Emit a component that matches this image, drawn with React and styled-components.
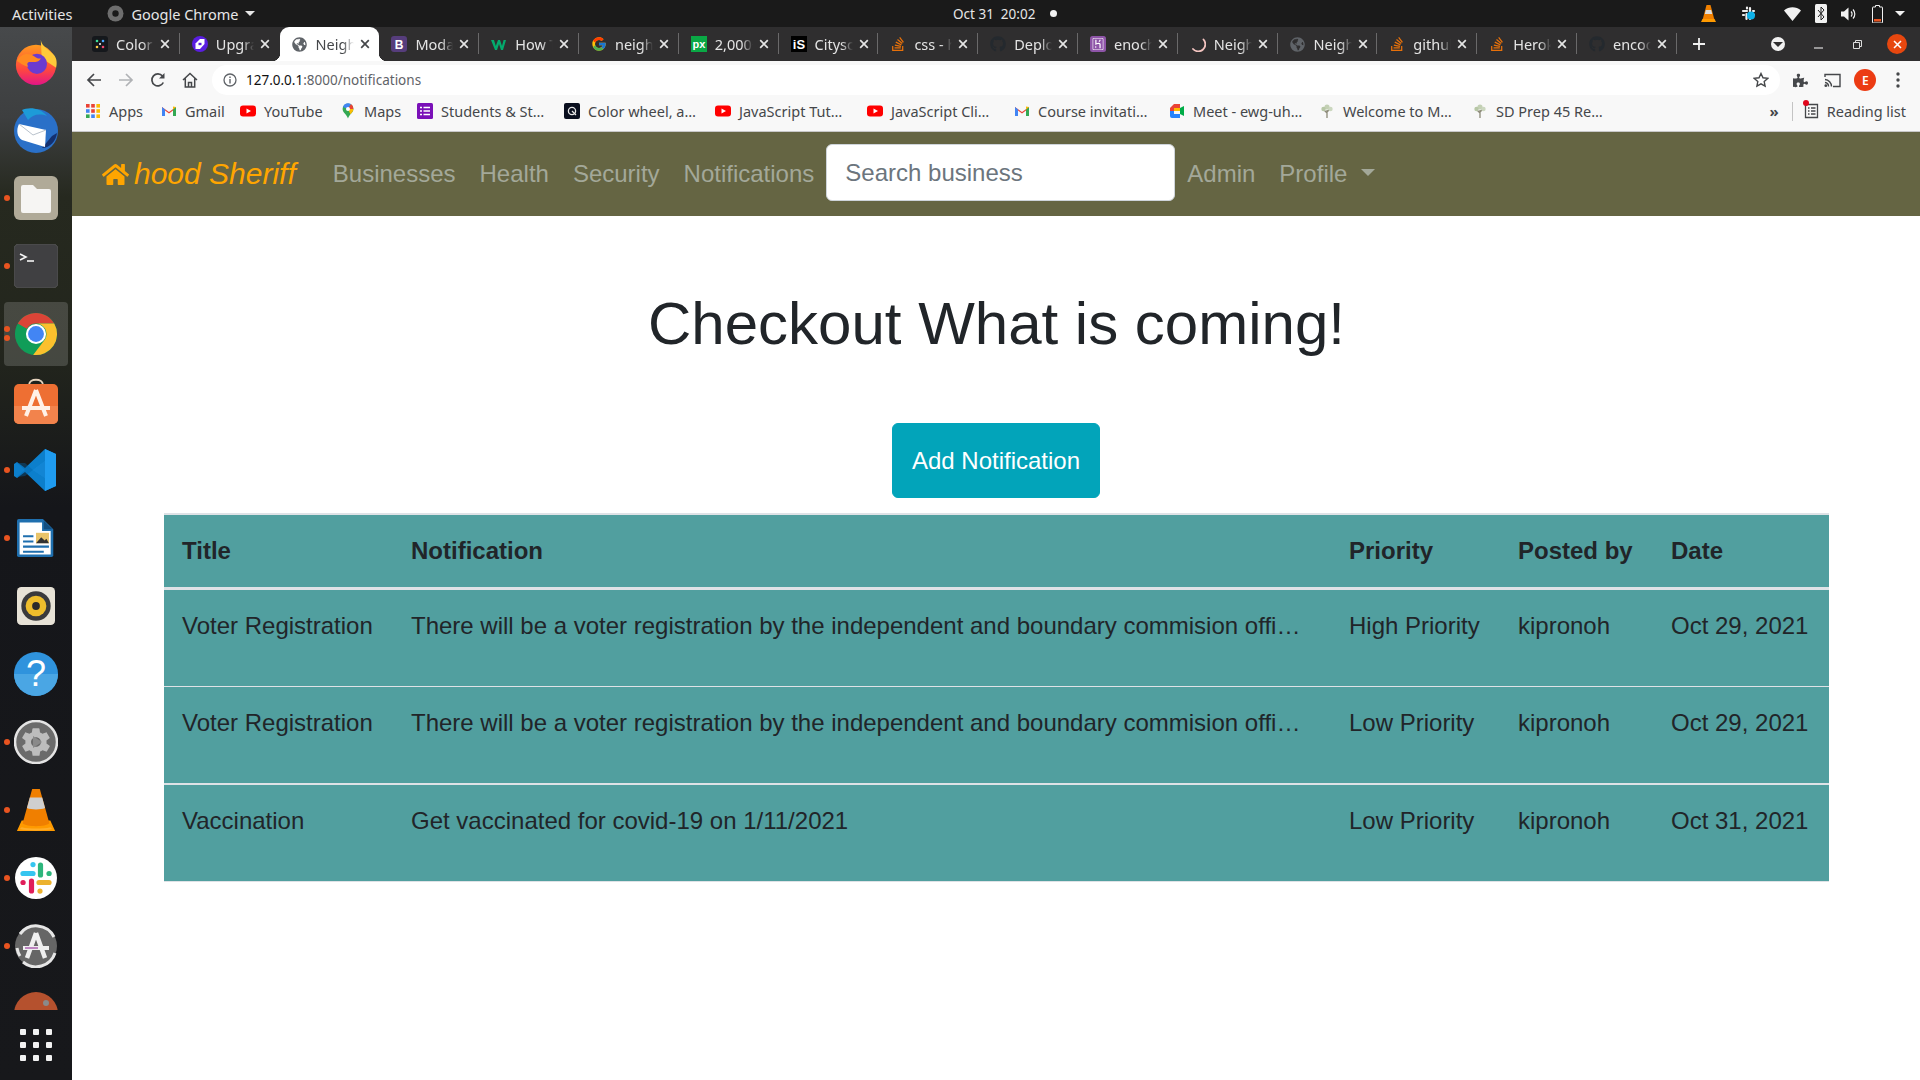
import React from 'react';
import styled, { createGlobalStyle } from 'styled-components';
import { FaHome, FaGithub, FaStackOverflow, FaGlobeAmericas, FaPuzzlePiece } from 'react-icons/fa';
import { FcGoogle } from 'react-icons/fc';
import { SiHeroku } from 'react-icons/si';
import { IoMdSettings } from 'react-icons/io';

const GlobalStyle = createGlobalStyle`
  html, body { margin: 0; padding: 0; background: #fff; }
  body { font-family: "Liberation Sans", Arial, sans-serif; overflow: hidden; }
  * { box-sizing: border-box; }
`;

/* ---------- shell ---------- */

const Screen = styled.div`
  width: 1920px;
  height: 1080px;
  display: flex;
  flex-direction: column;
  overflow: hidden;
`;

const TopBar = styled.header`
  height: 27px;
  flex: none;
  background: #1a1a1a;
  color: #e6e6e6;
  font-family: "Noto Sans", sans-serif;
  font-size: 14.5px;
  display: grid;
  grid-template-columns: 953px auto 1fr;
  align-items: center;
`;

const TopLeft = styled.div`
  display: flex;
  align-items: center;
  padding-left: 12px;
`;

const AppName = styled.div`
  display: flex;
  align-items: center;
  gap: 7px;
  margin-left: 35px;
`;

const Caret = styled.span`
  display: inline-block;
  border-left: 5px solid transparent;
  border-right: 5px solid transparent;
  border-top: 5px solid ${p => p.$color || '#e6e6e6'};
`;

const Clock = styled.div`
  display: flex;
  align-items: center;
  gap: 15px;
  font-size: 13.5px;
  white-space: pre;
`;

const ClockDot = styled.span`
  width: 7px;
  height: 7px;
  border-radius: 50%;
  background: #f2f2f2;
`;

const Tray = styled.div`
  display: flex;
  align-items: center;
  justify-content: flex-end;
  padding-right: 7px;
`;

const TraySlot = styled.div`
  width: ${p => p.$w}px;
  display: flex;
  justify-content: center;
  align-items: center;
`;

const Desktop = styled.div`
  flex: 1;
  display: flex;
  min-height: 0;
`;

const Dock = styled.aside`
  width: 72px;
  flex: none;
  display: flex;
  flex-direction: column;
  background: linear-gradient(180deg, #47494b 0, #3d3f40 90px, #26291f 170px, #23261d 320px, #15161a 480px, #17181b 100%);
`;

const DockList = styled.div`
  flex: 1;
  min-height: 0;
  overflow: hidden;
  padding-top: 1px;
`;

const DockItem = styled.div`
  height: 68px;
  position: relative;
  display: flex;
  align-items: center;
  justify-content: center;
  &::before {
    content: '';
    position: absolute;
    inset: 2px 4px;
    border-radius: 4px;
    background: ${p => (p.$active ? 'rgba(255,255,255,.16)' : 'transparent')};
  }
  svg { position: relative; }
`;

const RunDot = styled.span`
  position: absolute;
  left: 4px;
  top: ${p => p.$top || 31}px;
  width: 6px;
  height: 6px;
  border-radius: 50%;
  background: #e95420;
  z-index: 1;
`;

const ShowApps = styled.div`
  height: 70px;
  flex: none;
  display: flex;
  align-items: center;
  justify-content: center;
`;

const AppsGrid = styled.div`
  display: grid;
  grid-template-columns: repeat(3, 6px);
  gap: 7px;
  span { width: 6px; height: 6px; border-radius: 1px; background: #f2f2f2; }
`;

const Browser = styled.div`
  flex: 1;
  min-width: 0;
  display: flex;
  flex-direction: column;
  background: #fff;
`;

/* ---------- chrome tabs ---------- */

const TabStrip = styled.div`
  height: 34px;
  flex: none;
  background: #2f2e2f;
  display: flex;
  padding-left: 8px;
  position: relative;
`;

const Tab = styled.div`
  width: 99.8px;
  flex: none;
  position: relative;
  display: flex;
  align-items: center;
  padding-left: 12px;
  background: ${p => (p.$active ? '#fff' : 'transparent')};
  border-radius: ${p => (p.$active ? '9px 9px 0 0' : '0')};
  color: ${p => (p.$active ? '#45474a' : '#e4e4e4')};
  font-family: "Noto Sans", sans-serif;
  font-size: 14.5px;
  &::after {
    content: '';
    position: absolute;
    right: 0;
    top: 6px;
    bottom: 7px;
    width: 1px;
    background: ${p => (p.$plain ? 'transparent' : '#6a696a')};
  }
`;

const TabFlare = styled.span`
  position: absolute;
  bottom: 0;
  width: 8px;
  height: 8px;
  ${p => (p.$side === 'left' ? 'left: -8px;' : 'right: -8px;')}
  background: radial-gradient(circle at ${p => (p.$side === 'left' ? '0 0' : '100% 0')}, transparent 8px, #fff 8.5px);
`;

const Favicon = styled.span`
  width: 16px;
  height: 16px;
  flex: none;
  display: flex;
  align-items: center;
  justify-content: center;
`;

const TabTitle = styled.span`
  width: 38px;
  margin-left: 8px;
  overflow: hidden;
  white-space: nowrap;
  -webkit-mask-image: linear-gradient(90deg, #000 70%, transparent 100%);
  mask-image: linear-gradient(90deg, #000 70%, transparent 100%);
`;

const TabClose = styled.span`
  margin-left: 5px;
  width: 12px;
  height: 12px;
  display: flex;
`;

const NewTab = styled.div`
  margin-left: 15px;
  display: flex;
  align-items: center;
`;

const WindowControls = styled.div`
  margin-left: auto;
  display: flex;
  align-items: center;
`;

const ProfileChip = styled.span`
  width: 14px;
  height: 14px;
  border-radius: 50%;
  background: #f1f1f1;
  margin-right: 14px;
  display: flex;
  align-items: center;
  justify-content: center;
`;

const WinButton = styled.span`
  width: 39px;
  display: flex;
  justify-content: center;
`;

const WinClose = styled.span`
  width: 20px;
  height: 20px;
  border-radius: 50%;
  background: #e7470f;
  margin: 0 13px 0 10px;
  display: flex;
  align-items: center;
  justify-content: center;
`;

/* ---------- toolbar + bookmarks ---------- */

const Toolbar = styled.div`
  height: 34px;
  flex: none;
  background: #f8f8f8;
  display: flex;
  align-items: flex-start;
  padding: 4px 0 0 6px;
`;

const NavIcon = styled.span`
  width: 32px;
  height: 30px;
  display: flex;
  align-items: center;
  justify-content: center;
`;

const Omnibox = styled.div`
  width: 1568px;
  height: 30px;
  margin-left: 6px;
  border-radius: 15px;
  background: #fff;
  display: flex;
  align-items: center;
  padding-left: 11px;
  font-family: "Noto Sans", sans-serif;
  font-size: 13.5px;
  color: #5f6368;
`;

const UrlHost = styled.span`
  margin-left: 9px;
  color: #111;
`;

const OmniStar = styled.span`
  margin-left: auto;
  margin-right: 11px;
  display: flex;
`;

const ToolRight = styled.div`
  display: flex;
  align-items: center;
  height: 30px;
  margin-left: 4px;
`;

const ToolSlot = styled.span`
  width: 32.5px;
  display: flex;
  align-items: center;
  justify-content: center;
`;

const Avatar = styled.span`
  width: 22px;
  height: 22px;
  border-radius: 50%;
  background: #ec3b13;
  color: #fff;
  font-family: "Noto Sans", sans-serif;
  font-size: 12px;
  font-weight: 600;
  display: flex;
  align-items: center;
  justify-content: center;
`;

const Bookmarks = styled.div`
  height: 37px;
  flex: none;
  background: #f8f8f8;
  border-bottom: 1px solid #c8c8c8;
  display: flex;
  align-items: center;
  padding: 0 0 4px 13px;
  font-family: "Noto Sans", sans-serif;
  font-size: 14.5px;
  color: #45474a;
`;

const Bookmark = styled.div`
  width: ${p => p.$w}px;
  flex: none;
  display: flex;
  align-items: center;
  gap: 8px;
  white-space: nowrap;
`;

const BookmarkEnd = styled.div`
  margin-left: auto;
  display: flex;
  align-items: center;
  padding-right: 14px;
`;

const Chevrons = styled.span`
  font-size: 15px;
  font-weight: 700;
  margin-right: 13px;
`;

const BarSep = styled.span`
  width: 1px;
  height: 19px;
  background: #c4c4c4;
  margin-right: 11px;
`;

const ReadingIcon = styled.span`
  position: relative;
  display: flex;
  margin-right: 8px;
  &::after {
    content: '';
    position: absolute;
    left: -1px;
    top: -3px;
    width: 6px;
    height: 6px;
    border-radius: 50%;
    background: #e0071c;
  }
`;

/* ---------- the page ---------- */

const Page = styled.div`
  flex: 1;
  min-height: 0;
  display: flex;
  flex-direction: column;
  background: #fff;
  color: #212529;
  font-size: 24px;
  line-height: 36px;
`;

const NavBar = styled.nav`
  height: 84px;
  flex: none;
  background: #656543;
  display: flex;
  align-items: flex-start;
  padding: 12px 24px 0 30px;
`;

const Brand = styled.a`
  height: 60px;
  display: flex;
  align-items: center;
  gap: 5px;
  margin-right: 25px;
  color: #ffa500;
  font-size: 30px;
  font-style: italic;
  white-space: nowrap;
`;

const NavLink = styled.a`
  height: 60px;
  display: flex;
  align-items: center;
  padding: 0 12px;
  color: #a3a899;
  white-space: nowrap;
`;

const DropCaret = styled.span`
  margin-left: 14px;
  margin-top: -3px;
  border-left: 7.2px solid transparent;
  border-right: 7.2px solid transparent;
  border-top: 7.2px solid #a3a899;
`;

const SearchInput = styled.input`
  width: 349px;
  height: 57px;
  padding: 0 18px;
  border: 1px solid #ced4da;
  border-radius: 6px;
  background: #fff;
  font-family: inherit;
  font-size: 24px;
  color: #495057;
  &::placeholder { color: #6c757d; opacity: 1; }
`;

const Content = styled.main`
  padding: 72px 91px 0 92px;
  display: flex;
  flex-direction: column;
  align-items: center;
`;

const Heading = styled.h1`
  margin: 0 0 63px;
  font-size: 60px;
  line-height: 72px;
  font-weight: 400;
`;

const AddButton = styled.button`
  height: 75px;
  width: 208px;
  margin: 0 1px 15px 0;
  border: 1px solid #02a4ba;
  border-radius: 6px;
  background: #02a4ba;
  color: #fff;
  font-family: inherit;
  font-size: 24px;
  line-height: 36px;
`;

const Table = styled.table`
  width: 1665px;
  table-layout: fixed;
  border-collapse: collapse;
  background: #519f9f;
  color: #212529;
  border-bottom: 1px solid #dee2e6;
  tbody tr:last-child td { border-top-width: 2px; }
`;

const Th = styled.th`
  padding: 18px;
  text-align: left;
  font-weight: 700;
  border-top: 2px solid #dee2e6;
  border-bottom: 3px solid #dee2e6;
  height: 74px;
  white-space: nowrap;
`;

const Td = styled.td`
  padding: 18px ${p => (p.$clip ? '30px' : '18px')} 42px 18px;
  border-top: 1px solid #dee2e6;
  vertical-align: top;
  white-space: nowrap;
  overflow: hidden;
  text-overflow: ${p => (p.$clip ? 'ellipsis' : 'clip')};
`;

/* ---------- small drawings ---------- */

const Svg = ({ s = 16, w, h, vb, children }) => (
  <svg width={w || s} height={h || s} viewBox={vb || `0 0 ${s} ${s}`}>{children}</svg>
);

const CloseX = ({ color = '#e4e4e4', s = 12 }) => (
  <svg width={s} height={s} viewBox="0 0 12 12">
    <path d="M2.2 2.2l7.6 7.6M9.8 2.2l-7.6 7.6" stroke={color} strokeWidth="1.7" />
  </svg>
);

const favicons = {
  color: (
    <Svg>
      <rect width="16" height="16" rx="3" fill="#15181c" />
      <circle cx="5" cy="5" r="1.3" fill="#3ddc97" />
      <circle cx="11" cy="5" r="1.3" fill="#4aa8ff" />
      <circle cx="5" cy="11" r="1.3" fill="#ffcb47" />
      <circle cx="11" cy="11" r="1.3" fill="#ef476f" />
      <circle cx="8" cy="8" r="1" fill="#fff" />
    </Svg>
  ),
  upgrade: (
    <Svg>
      <circle cx="8" cy="8" r="8" fill="#5a1ee0" />
      <path d="M3.500 7.500L8 3h4.500v5L8 13H3.500z" fill="#fff" />
      <path d="M6.500 6.800h3v2.400h-3z" fill="#5a1ee0" />
    </Svg>
  ),
  globe: c => <FaGlobeAmericas size={15} color={c} />,
  bootstrap: (
    <Svg>
      <rect width="16" height="16" rx="3" fill="#563d7c" />
      <text x="8" y="12.500" textAnchor="middle" fontSize="12" fontWeight="700" fill="#fff" fontFamily="Liberation Sans">B</text>
    </Svg>
  ),
  w3: (
    <Svg>
      <path d="M0 4h3l1.800 6L7 4h2l2 6 1.600-6H15l-3 10H10L8 8l-2 6H4z" fill="#04aa6d" />
    </Svg>
  ),
  google: <FcGoogle size={16} />,
  px: (
    <Svg>
      <rect width="16" height="16" fill="#0aa845" />
      <text x="8" y="12" textAnchor="middle" fontSize="11" fontWeight="700" fill="#fff" fontFamily="Liberation Sans">px</text>
    </Svg>
  ),
  is: (
    <Svg>
      <rect width="16" height="16" fill="#000" />
      <text x="8" y="13" textAnchor="middle" fontSize="13" fontWeight="700" fill="#fff" fontFamily="Liberation Sans">iS</text>
    </Svg>
  ),
  so: <FaStackOverflow size={16} color="#e8710a" />,
  gh: <FaGithub size={16} color="#24292e" />,
  heroku: (
    <Svg>
      <rect width="16" height="16" rx="2.500" fill="#8e55a8" />
      <g transform="translate(2 2)"><SiHeroku size={12} color="#fff" /></g>
    </Svg>
  ),
  spinner: (
    <Svg>
      <path d="M13.500 3.500 A6.500 6.500 0 0 1 3 13" fill="none" stroke="#f3c4c0" strokeWidth="1.800" strokeLinecap="round" />
    </Svg>
  ),
};

const tabs = [
  { icon: favicons.color, title: 'Color wheel' },
  { icon: favicons.upgrade, title: 'Upgrade now' },
  { icon: favicons.globe('#5f6368'), title: 'Neighbourhood', active: true, plain: true },
  { icon: favicons.bootstrap, title: 'Modal · Bootstrap' },
  { icon: favicons.w3, title: 'How To Create' },
  { icon: favicons.google, title: 'neighbourhood' },
  { icon: favicons.px, title: '2,000+ Free' },
  { icon: favicons.is, title: 'Cityscapes' },
  { icon: favicons.so, title: 'css - how to' },
  { icon: favicons.gh, title: 'Deploy Django' },
  { icon: favicons.heroku, title: 'enoch-app' },
  { icon: favicons.spinner, title: 'Neighbourhood' },
  { icon: favicons.globe('#5f6368'), title: 'Neighbourhood' },
  { icon: favicons.so, title: 'github - how' },
  { icon: favicons.so, title: 'Heroku deploy' },
  { icon: favicons.gh, title: 'encoder' },
];

const Tree = () => (
  <Svg>
    <path d="M8 15V7M8 10L5 7M8 9l3-3" stroke="#8c8a78" strokeWidth="1.300" fill="none" />
    <circle cx="8" cy="4" r="2.600" fill="#c3d0b4" />
    <circle cx="4.500" cy="6" r="2.200" fill="#b7c7a6" />
    <circle cx="11.500" cy="6" r="2.200" fill="#cbd7bf" />
  </Svg>
);

const YouTube = () => (
  <Svg>
    <rect y="2.500" width="16" height="11" rx="3" fill="#f00" />
    <path d="M6.500 5.500L11 8l-4.500 2.500z" fill="#fff" />
  </Svg>
);

const Gmail = () => (
  <Svg>
    <path d="M1 13V4l7 5 7-5v9h-3V7.500L8 10.500 4 7.500V13z" fill="#ea4335" />
    <path d="M1 13V4l3 2.500V13z" fill="#4285f4" />
    <path d="M15 13V4l-3 2.500V13z" fill="#34a853" />
    <path d="M15 4l-3 2.500V3.500z" fill="#fbbc04" />
  </Svg>
);

const bookmarks = [
  { w: 76, text: 'Apps', icon: (
    <Svg>
      {['#ea4335', '#ea4335', '#fbbc04', '#4285f4', '#ea4335', '#fbbc04', '#34a853', '#4285f4', '#fbbc04'].map((c, i) => (
        <rect key={i} x={1 + (i % 3) * 5.2} y={1 + Math.floor(i / 3) * 5.2} width="3.600" height="3.600" fill={c} />
      ))}
    </Svg>
  ) },
  { w: 79, text: 'Gmail', icon: <Gmail /> },
  { w: 100, text: 'YouTube', icon: <YouTube /> },
  { w: 77, text: 'Maps', icon: (
    <Svg>
      <path d="M8 .500a5.400 5.400 0 0 0-5.400 5.400C2.600 9.500 6.600 11 8 15.500c1.400-4.500 5.400-6 5.400-9.600A5.400 5.400 0 0 0 8 .500z" fill="#34a853" />
      <path d="M3 4a5.400 5.400 0 0 1 8-3L8 6z" fill="#4285f4" />
      <path d="M11 1a5.400 5.400 0 0 1 2.400 5L8 6z" fill="#ea4335" />
      <path d="M13.400 6c0 2-1.500 3.400-3 5.300L8 6z" fill="#fbbc04" />
      <circle cx="8" cy="6" r="2" fill="#fff" />
    </Svg>
  ) },
  { w: 147, text: 'Students & St…', icon: (
    <Svg>
      <rect width="16" height="16" rx="1.500" fill="#7a10b8" />
      <path d="M6.500 4.500H13M6.500 8H13M6.500 11.500H13M3 4.500h2M3 8h2M3 11.500h2" stroke="#fff" strokeWidth="1.600" />
    </Svg>
  ) },
  { w: 151, text: 'Color wheel, a…', icon: (
    <Svg>
      <rect width="16" height="16" rx="2" fill="#0a0f1f" />
      <circle cx="8" cy="8" r="3.600" fill="none" stroke="#e8e8e8" strokeWidth="1.300" />
      <path d="M8 8l4 4" stroke="#e8e8e8" strokeWidth="1.300" />
    </Svg>
  ) },
  { w: 152, text: 'JavaScript Tut…', icon: <YouTube /> },
  { w: 147, text: 'JavaScript Cli…', icon: <YouTube /> },
  { w: 155, text: 'Course invitati…', icon: <Gmail /> },
  { w: 150, text: 'Meet - ewg-uh…', icon: (
    <Svg>
      <path d="M1 5l4-4h6v4H5v3H1z" fill="#ea4335" />
      <path d="M1 8h4v3h6v4H3a2 2 0 0 1-2-2z" fill="#2684fc" />
      <path d="M11 1v4l4-2v10l-4-2v4V1z" fill="#00ac47" />
      <path d="M5 5h6v3H5z" fill="#ffba00" />
    </Svg>
  ) },
  { w: 153, text: 'Welcome to M…', icon: <Tree /> },
  { w: 150, text: 'SD Prep 45 Re…', icon: <Tree /> },
];

const dockIcons = [
  { key: 'firefox', icon: (
    <Svg s={48} w={46} h={46}>
      <defs>
        <linearGradient id="ffx" x1="0" y1="0" x2="0" y2="1">
          <stop offset="0" stopColor="#ff9a1f" /><stop offset=".6" stopColor="#ff4a3c" /><stop offset="1" stopColor="#e31587" />
        </linearGradient>
      </defs>
      <circle cx="24" cy="27" r="21" fill="url(#ffx)" />
      <path d="M29 1c1 7 9 10 14 16 3 4 3 9 2 13L30 20z" fill="#ffc93a" />
      <circle cx="25" cy="26" r="10.500" fill="#6b3bd0" />
      <path d="M4 23c4-8 12-9 18-5 3 2 5 3 7 2-2 5-8 4-11 4-3 0-4 2-2 5-6-1-9-5-12-6z" fill="#ff8a22" />
    </Svg>
  ) },
  { key: 'thunderbird', icon: (
    <Svg s={48} w={48} h={48}>
      <circle cx="24" cy="25" r="22" fill="#2a70c8" />
      <path d="M10 4c6-3 18-3 25 6-8-3-15-1-19 4z" fill="#1d9bd8" />
      <path d="M30 42l10-12 5-3c-1 8-7 15-15 15z" fill="#14306f" />
      <path d="M7 18l27 6-1 17-23-7C5 31 4 24 7 18z" fill="#fff" />
      <path d="M7 18l14 11 13-5" fill="none" stroke="#b9c2cc" strokeWidth="1" />
    </Svg>
  ) },
  { key: 'files', dot: true, icon: (
    <Svg s={44}>
      <rect width="44" height="44" rx="6" fill="#b0aa98" />
      <path d="M7 11a2 2 0 0 1 2-2h10l4 4h12a2 2 0 0 1 2 2v20a2 2 0 0 1-2 2H9a2 2 0 0 1-2-2z" fill="#f6f5f3" />
    </Svg>
  ) },
  { key: 'terminal', dot: true, icon: (
    <Svg s={44}>
      <rect width="44" height="44" rx="5" fill="#404042" stroke="#555" />
      <path d="M6 10l6 3-6 3" fill="none" stroke="#f5f5f5" strokeWidth="1.600" />
      <path d="M13 17h7" stroke="#f5f5f5" strokeWidth="1.600" />
    </Svg>
  ) },
  { key: 'chrome', active: true, dots: [26, 35], icon: (
    <Svg s={48} w={46} h={46}>
      <circle cx="24" cy="24" r="22" fill="#109d58" />
      <path d="M5 13A22 22 0 0 1 43 13H24A11 11 0 0 0 14.500 18.500z" fill="#db4437" />
      <path d="M43 13A22 22 0 0 1 21 45.800L33.500 29.500A11 11 0 0 0 24 13z" fill="#fbc02d" />
      <circle cx="24" cy="24" r="10.500" fill="#fff" />
      <circle cx="24" cy="24" r="8.300" fill="#4285f4" />
    </Svg>
  ) },
  { key: 'store', icon: (
    <Svg s={44} h={48} vb="0 -4 44 48">
      <path d="M15 3c0-7 14-7 14 0" fill="none" stroke="#e5d3bd" strokeWidth="2" />
      <rect y="2" width="44" height="40" rx="5" fill="#ee6f33" />
      <path d="M0 24h44v13a5 5 0 0 1-5 5H5a5 5 0 0 1-5-5z" fill="#f2834c" />
      <path d="M22 8L12 34M22 8l10 26M8 26h28" stroke="#fff1e8" strokeWidth="4" fill="none" />
    </Svg>
  ) },
  { key: 'vscode', dot: true, icon: (
    <Svg s={44} h={44}>
      <path d="M31 1l11 5v32l-11 5L11 24 3 30 0 28v-12l3-2 8 6z" fill="#0c7fcc" />
      <path d="M31 1l11 5v32l-11 5V30l-12-8L31 13z" fill="#1f9cf0" />
      <path d="M31 13L19 22l-8-7-8 0L11 22l-8 7 8-1 8-6 12 8z" fill="#0065a9" opacity=".4" />
    </Svg>
  ) },
  { key: 'writer', dot: true, icon: (
    <Svg s={44} w={38} h={46}>
      <path d="M2 0h28l12 12v30a2 2 0 0 1-2 2H2a2 2 0 0 1-2-2V2a2 2 0 0 1 2-2z" fill="#1f6fae" />
      <path d="M3 4h26v10h10v27H3z" fill="#fff" />
      <path d="M31 2l10 10H31z" fill="#124e80" />
      <path d="M7 20h12M7 26h12M7 32h30M7 38h24" stroke="#1f6fae" strokeWidth="2.400" />
      <rect x="22" y="16" width="15" height="12" fill="#e9c46a" />
      <path d="M22 28l6-7 4 4 2-2 3 5z" fill="#333" />
    </Svg>
  ) },
  { key: 'rhythmbox', icon: (
    <Svg s={44} w={38} h={44}>
      <rect width="44" height="44" rx="5" fill="#e7e2d6" />
      <circle cx="22" cy="22" r="17" fill="#3a3a3c" />
      <circle cx="22" cy="22" r="12" fill="#eebd2c" />
      <circle cx="22" cy="22" r="4.500" fill="#2b2b2b" />
    </Svg>
  ) },
  { key: 'help', icon: (
    <Svg s={44}>
      <circle cx="22" cy="22" r="22" fill="#2f93dd" />
      <path d="M0 22h44a22 22 0 0 1-44 0z" fill="#4aa6e4" />
      <text x="22" y="34" textAnchor="middle" fontSize="36" fill="#fff" fontFamily="Liberation Sans">?</text>
    </Svg>
  ) },
  { key: 'settings', dot: true, icon: (
    <Svg s={44}>
      <circle cx="22" cy="22" r="21" fill="#6b6b6b" stroke="#e4e4e4" strokeWidth="2.500" />
      <g transform="translate(5 5)"><IoMdSettings size={34} color="#bdbdbd" /></g>
      <path d="M19 16l9 6-9 6z" fill="#8a8a8a" />
    </Svg>
  ) },
  { key: 'vlc', dot: true, icon: (
    <Svg s={44} w={42} h={46}>
      <path d="M2 44l5-11h30l5 11z" fill="#ff9a00" />
      <path d="M18 0h8l10 36c-4 4-24 4-28 0z" fill="#f07f00" />
      <path d="M15.500 9h13l3 11c-5 2-14 2-19 0z" fill="#cfcfcf" />
      <path d="M7 40c8 2 22 2 30 0l2 2c-8 2-26 2-34 0z" fill="#ffae2b" />
    </Svg>
  ) },
  { key: 'slack', dot: true, icon: (
    <Svg s={44}>
      <circle cx="22" cy="22" r="21" fill="#fff" />
      <g strokeWidth="5.200" strokeLinecap="round" fill="none">
        <path d="M9 17.500h10" stroke="#36c5f0" />
        <path d="M19 8.500v.1" stroke="#36c5f0" />
        <path d="M26.500 9v10" stroke="#2eb67d" />
        <path d="M35 17.500h.1" stroke="#2eb67d" />
        <path d="M25 26.500h10" stroke="#ecb22e" />
        <path d="M26 35v.1" stroke="#ecb22e" />
        <path d="M17.500 25v10" stroke="#e01e5a" />
        <path d="M9 26.500h.1" stroke="#e01e5a" />
      </g>
    </Svg>
  ) },
  { key: 'updater', dot: true, icon: (
    <Svg s={44}>
      <circle cx="22" cy="22" r="21" fill="#666" />
      <path d="M6 10A20 20 0 0 1 40 13M41 29A20 20 0 0 1 9 38M3 24a20 20 0 0 0 3 8" fill="none" stroke="#e6e6e6" strokeWidth="3" />
      <path d="M22 9l-9 25M22 9l9 25" stroke="#efefef" strokeWidth="4.500" fill="none" />
      <path d="M9 24h26" stroke="#efefef" strokeWidth="4" />
      <path d="M11 24h13" stroke="#9a3fa0" strokeWidth="1.200" />
    </Svg>
  ) },
  { key: 'partial', icon: (
    <Svg s={44}>
      <circle cx="22" cy="22" r="22" fill="#b5512e" />
      <rect y="18" width="44" height="26" fill="#17181b" />
      <circle cx="32" cy="11" r="3" fill="#8a8a8a" />
    </Svg>
  ) },
];

const rows = [
  ['Voter Registration', 'There will be a voter registration by the independent and boundary commision office in all wards', 'High Priority', 'kipronoh', 'Oct 29, 2021'],
  ['Voter Registration', 'There will be a voter registration by the independent and boundary commision office in all wards', 'Low Priority', 'kipronoh', 'Oct 29, 2021'],
  ['Vaccination', 'Get vaccinated for covid-19 on 1/11/2021', 'Low Priority', 'kipronoh', 'Oct 31, 2021'],
];

const colWidths = [229, 938, 169, 153, 176];

const App = () => {
  return (
    <Screen>
      <GlobalStyle />
      <TopBar>
        <TopLeft>
          Activities
          <AppName>
            <svg width="17" height="17" viewBox="0 0 17 17">
              <circle cx="8.500" cy="8.500" r="8" fill="#6e6e6e" />
              <circle cx="8.500" cy="8.500" r="3.200" fill="#1a1a1a" />
            </svg>
            Google Chrome
            <Caret />
          </AppName>
        </TopLeft>
        <Clock>
          {'Oct 31  20:02'}
          <ClockDot />
        </Clock>
        <Tray>
          <TraySlot $w={30}>
            <svg width="15" height="17" viewBox="0 0 15 17">
              <path d="M5.500 0h4l4 15H1.500z" fill="#f08000" />
              <path d="M4.800 5h5.400l1 4H3.800z" fill="#ddd" />
              <path d="M0 17l1.500-3h12l1.500 3z" fill="#ff9a00" />
            </svg>
          </TraySlot>
          <TraySlot $w={50}>
            <svg width="15" height="15" viewBox="0 0 15 15">
              <path d="M2 5h4M6 1.500v1M9 2v4M12 5h1M9 9h4M9 13v-1M5.500 8v5M2 9h1" stroke="#eee" strokeWidth="2.200" strokeLinecap="round" />
              <circle cx="10" cy="9.500" r="4" fill="#0eb1e8" />
            </svg>
          </TraySlot>
          <TraySlot $w={38}>
            <svg width="17" height="14" viewBox="0 0 17 14">
              <path d="M0 3.500C5-.8 12-.8 17 3.500L8.500 14z" fill="#f2f2f2" />
            </svg>
          </TraySlot>
          <TraySlot $w={20}>
            <svg width="12" height="19" viewBox="0 0 12 19">
              <rect width="12" height="19" rx="1.500" fill="#f2f2f2" />
              <path d="M3 6l6 7-3 3V3l3 3-6 7" fill="none" stroke="#222" strokeWidth="1" />
            </svg>
          </TraySlot>
          <TraySlot $w={36}>
            <svg width="16" height="14" viewBox="0 0 16 14">
              <path d="M0 4.500h3L7.500.500v13L3 9.500H0z" fill="#f2f2f2" />
              <path d="M10 4.500a3.500 3.500 0 0 1 0 5M12 2.500a6.500 6.500 0 0 1 0 9" fill="none" stroke="#f2f2f2" strokeWidth="1.200" />
            </svg>
          </TraySlot>
          <TraySlot $w={20}>
            <svg width="11" height="18" viewBox="0 0 11 18">
              <path d="M3.500 .500h4v1.500H10a.5.500 0 0 1 .5.500v15a.5.500 0 0 1-.5.500H1a.5.500 0 0 1-.5-.500v-15a.5.500 0 0 1 .5-.500h2.500z" fill="none" stroke="#f2f2f2" />
              <rect x="2" y="14" width="7" height="2.500" fill="#e95420" />
            </svg>
          </TraySlot>
          <TraySlot $w={26}>
            <Caret $color="#f2f2f2" />
          </TraySlot>
        </Tray>
      </TopBar>

      <Desktop>
        <Dock>
          <DockList>
            {dockIcons.map(d => (
              <DockItem key={d.key} $active={d.active}>
                {d.dot && <RunDot />}
                {d.dots && d.dots.map(t => <RunDot key={t} $top={t} />)}
                {d.icon}
              </DockItem>
            ))}
          </DockList>
          <ShowApps>
            <AppsGrid>
              {Array.from({ length: 9 }).map((_, i) => <span key={i} />)}
            </AppsGrid>
          </ShowApps>
        </Dock>

        <Browser>
          <TabStrip>
            {tabs.map((t, i) => (
              <Tab key={i} $active={t.active} $plain={t.plain || i === 1}>
                {t.active && <TabFlare $side="left" />}
                {t.active && <TabFlare $side="right" />}
                <Favicon>{t.icon}</Favicon>
                <TabTitle>{t.title}</TabTitle>
                <TabClose><CloseX color={t.active ? '#45474a' : '#e4e4e4'} /></TabClose>
              </Tab>
            ))}
            <NewTab>
              <svg width="14" height="14" viewBox="0 0 14 14">
                <path d="M7 1v12M1 7h12" stroke="#f0f0f0" strokeWidth="1.800" />
              </svg>
            </NewTab>
            <WindowControls>
              <ProfileChip>
                <Caret $color="#2f2e2f" />
              </ProfileChip>
              <WinButton>
                <svg width="9" height="9" viewBox="0 0 9 9"><path d="M0 8h9" stroke="#ddd" strokeWidth="1.200" /></svg>
              </WinButton>
              <WinButton>
                <svg width="9" height="9" viewBox="0 0 9 9">
                  <path d="M.500 2.500h6v6h-6zM2.500 2.500v-2h6v6h-2" fill="none" stroke="#ddd" />
                </svg>
              </WinButton>
              <WinClose><CloseX color="#fff" s={11} /></WinClose>
            </WindowControls>
          </TabStrip>

          <Toolbar>
            <NavIcon>
              <svg width="16" height="16" viewBox="0 0 16 16">
                <path d="M15 8H2M8 2L2 8l6 6" fill="none" stroke="#45474a" strokeWidth="1.700" />
              </svg>
            </NavIcon>
            <NavIcon>
              <svg width="16" height="16" viewBox="0 0 16 16">
                <path d="M1 8h13M8 2l6 6-6 6" fill="none" stroke="#b0b2b5" strokeWidth="1.700" />
              </svg>
            </NavIcon>
            <NavIcon>
              <svg width="16" height="16" viewBox="0 0 16 16">
                <path d="M13.300 10.500A6 6 0 1 1 12.500 4" fill="none" stroke="#45474a" strokeWidth="1.700" />
                <path d="M14.500 1v5.500H9z" fill="#45474a" />
              </svg>
            </NavIcon>
            <NavIcon>
              <svg width="16" height="16" viewBox="0 0 16 16">
                <path d="M1 8l7-6.500L15 8M3.300 6.500V15h9.400V6.500M6.500 15v-4.500h3V15" fill="none" stroke="#45474a" strokeWidth="1.500" />
              </svg>
            </NavIcon>
            <Omnibox>
              <svg width="14" height="14" viewBox="0 0 14 14">
                <circle cx="7" cy="7" r="6" fill="none" stroke="#5f6368" strokeWidth="1.300" />
                <path d="M7 6v4.500M7 3.500v1.500" stroke="#5f6368" strokeWidth="1.400" />
              </svg>
              <UrlHost>127.0.0.1</UrlHost>:8000/notifications
              <OmniStar>
                <svg width="16" height="16" viewBox="0 0 16 16">
                  <path d="M8 1.500l2 4.300 4.700.6-3.500 3.200.9 4.600L8 11.900l-4.100 2.300.9-4.600L1.300 6.400 6 5.800z" fill="none" stroke="#45474a" strokeWidth="1.400" />
                </svg>
              </OmniStar>
            </Omnibox>
            <ToolRight>
              <ToolSlot><FaPuzzlePiece size={15} color="#45474a" /></ToolSlot>
              <ToolSlot>
                <svg width="17" height="15" viewBox="0 0 17 15">
                  <path d="M1 4V1.500h15v12H9" fill="none" stroke="#45474a" strokeWidth="1.400" />
                  <path d="M1 6.500a7 7 0 0 1 6.500 7M1 9.500a4 4 0 0 1 3.500 4" fill="none" stroke="#45474a" strokeWidth="1.400" />
                  <circle cx="1.800" cy="12.700" r="1.400" fill="#45474a" />
                </svg>
              </ToolSlot>
              <ToolSlot><Avatar>E</Avatar></ToolSlot>
              <ToolSlot>
                <svg width="4" height="16" viewBox="0 0 4 16">
                  <circle cx="2" cy="2" r="1.700" fill="#45474a" />
                  <circle cx="2" cy="8" r="1.700" fill="#45474a" />
                  <circle cx="2" cy="14" r="1.700" fill="#45474a" />
                </svg>
              </ToolSlot>
            </ToolRight>
          </Toolbar>

          <Bookmarks>
            {bookmarks.map(b => (
              <Bookmark key={b.text + b.w} $w={b.w}>
                {b.icon}
                {b.text}
              </Bookmark>
            ))}
            <BookmarkEnd>
              <Chevrons>»</Chevrons>
              <BarSep />
              <ReadingIcon>
                <svg width="15" height="16" viewBox="0 0 15 16">
                  <path d="M1.500 1.500h12v13h-12z" fill="none" stroke="#45474a" strokeWidth="1.300" />
                  <path d="M4 5h1.500M7 5h4.500M4 8h1.500M7 8h4.500M4 11h1.500M7 11h4.500" stroke="#45474a" strokeWidth="1.300" />
                </svg>
              </ReadingIcon>
              Reading list
            </BookmarkEnd>
          </Bookmarks>

          <Page>
            <NavBar>
              <Brand>
                <FaHome size={27} />
                hood Sheriff
              </Brand>
              <NavLink>Businesses</NavLink>
              <NavLink>Health</NavLink>
              <NavLink>Security</NavLink>
              <NavLink>Notifications</NavLink>
              <SearchInput placeholder="Search business" />
              <NavLink>Admin</NavLink>
              <NavLink>Profile<DropCaret /></NavLink>
            </NavBar>

            <Content>
              <Heading>Checkout What is coming!</Heading>
              <AddButton>Add Notification</AddButton>
              <Table>
                <colgroup>
                  {colWidths.map((w, i) => <col key={i} width={w} />)}
                </colgroup>
                <thead>
                  <tr>
                    <Th>Title</Th>
                    <Th>Notification</Th>
                    <Th>Priority</Th>
                    <Th>Posted by</Th>
                    <Th>Date</Th>
                  </tr>
                </thead>
                <tbody>
                  {rows.map((r, i) => (
                    <tr key={i}>
                      <Td>{r[0]}</Td>
                      <Td $clip>{r[1]}</Td>
                      <Td>{r[2]}</Td>
                      <Td>{r[3]}</Td>
                      <Td>{r[4]}</Td>
                    </tr>
                  ))}
                </tbody>
              </Table>
            </Content>
          </Page>
        </Browser>
      </Desktop>
    </Screen>
  );
};

export default App;
